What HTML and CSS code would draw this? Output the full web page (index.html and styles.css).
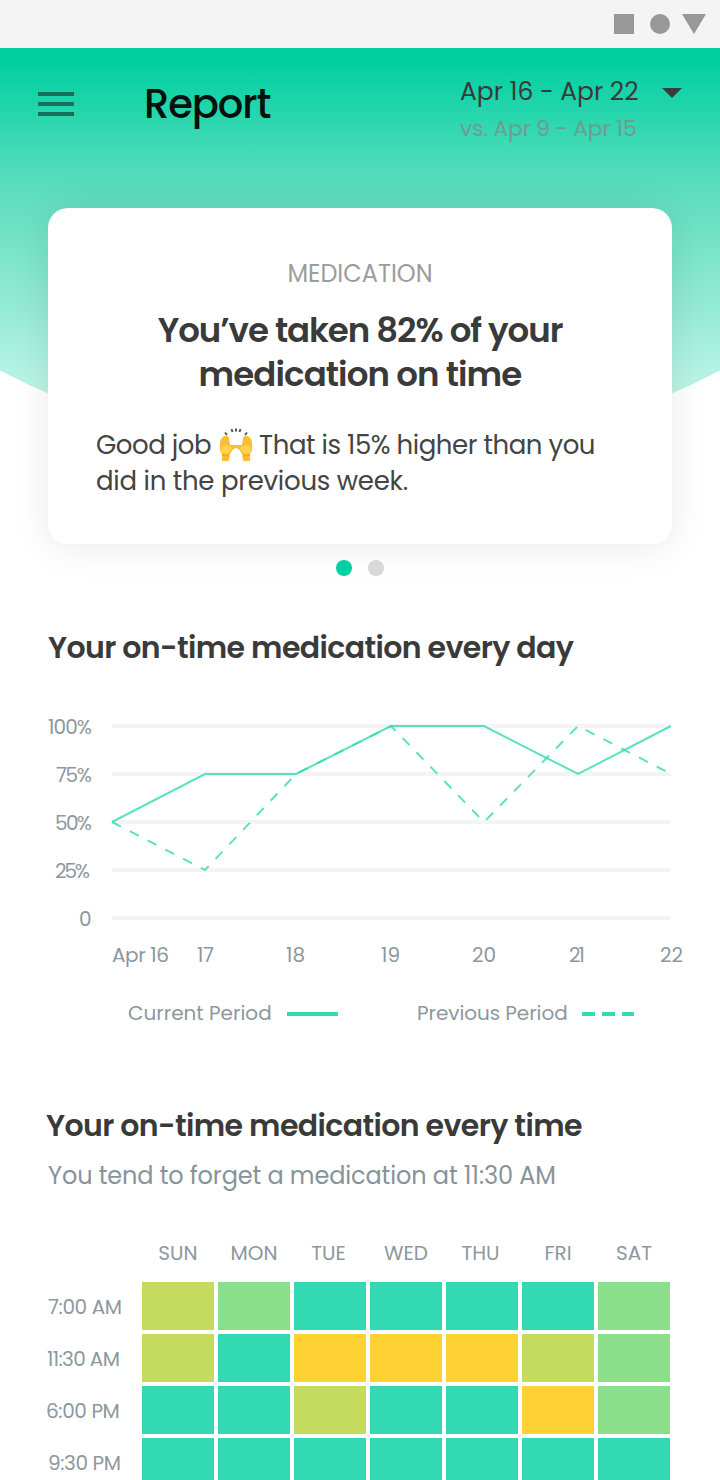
FILE: index.html
```html
<!DOCTYPE html>
<html lang="en">
<head>
<meta charset="utf-8">
<title>Report</title>
<link rel="stylesheet" href="styles.css">
</head>
<body>
<div class="screen">
  <div class="status-bar">
    <svg class="status-icons" viewBox="0 0 92 20"><path d="M0 0h20v20H0z"/><circle cx="46" cy="10" r="10"/><path d="M68 0h24L80 20z"/></svg>
  </div>
  <div class="backdrop"></div>
  <header class="app-bar">
    <svg class="menu" viewBox="0 0 36 24"><path d="M0 2h36M0 12h36M0 22h36"/></svg>
    <h1 class="app-title">Report</h1>
    <div class="period">
      <div class="period-current">Apr 16 - Apr 22</div>
      <div class="period-previous">vs. Apr 9 - Apr 15</div>
    </div>
    <svg class="caret" viewBox="0 0 20 10"><path d="M0 0h20L10 10z"/></svg>
  </header>
  <main class="content">
    <article class="card">
      <div class="card-label">MEDICATION</div>
      <h2 class="card-title">You’ve taken 82% of your<br><span class="title-second">medication on time</span></h2>
      <p class="card-text"><span class="text-first">Good job <svg class="hands" viewBox="0 0 34 34"><g fill="none" stroke="#555" stroke-width="2"><path d="M6 4.500 8 7M12.500 1 13.500 4M17 .5v3M21.500 1 20.500 4M28 4.500 26 7"/></g><path fill="#f9be35" d="M1 15Q1 11 4 9Q8 6 10 10L11 17Q17 17 23 17L24 10Q26 6 30 9Q33 11 33 15Q34 23 31 26V33H24L23 26Q20 20 17 20Q14 20 11 26L10 33H3V26Q0 23 1 15Z"/><path fill="#ffd252" d="M2 20Q6 16 11 18L13 20 10 25H3ZM32 20Q28 16 23 18L21 20 24 25H31Z"/><path fill="#eea52b" d="M3 27h7v1H3zM24 27h7v1h-7z"/></svg> That is 15% higher than you</span><br><span class="text-second">did in the previous week.</span></p>
    </article>
    <div class="pager"><span class="dot dot-active"></span><span class="dot"></span></div>

    <section>
      <h2 class="section-title">Your on-time medication every day</h2>
      <svg class="chart" viewBox="0 700 720 280">
        <path class="grid-lines" d="M112 726H671M112 774H671M112 822H671M112 870H671M112 918H671"/>
        <path class="series" d="M112 822 205 774H296L391 726H484L578 774 671 726"/>
        <path class="series previous" d="M112 822 205 870 296 774 391 726 484 822 578 726 671 774"/>
        <g class="axis">
          <text x="48" y="734" textLength="44">100%</text>
          <text x="56" y="782" textLength="36">75%</text>
          <text x="55" y="830" textLength="37">50%</text>
          <text x="55" y="878" textLength="35">25%</text>
          <text x="79" y="926">0</text>
          <text x="112" y="962" textLength="57">Apr 16</text>
          <text x="197" y="962" textLength="17">17</text>
          <text x="286" y="962" textLength="19">18</text>
          <text x="381" y="962" textLength="19">19</text>
          <text x="472" y="962" textLength="24">20</text>
          <text x="569" y="962" textLength="16">21</text>
          <text x="660" y="962" textLength="23">22</text>
        </g>
      </svg>
      <div class="legend">
        <span class="legend-current">Current Period</span><svg class="key" viewBox="0 0 52 4"><path d="M0 2H51"/></svg>
        <span class="legend-previous">Previous Period</span><svg class="key" viewBox="0 0 52 4"><path d="M0 2H52" stroke-dasharray="13 7"/></svg>
      </div>
    </section>

    <section class="time-section">
      <h2 class="section-title">Your on-time medication every time</h2>
      <p class="hint">You tend to forget a medication at 11:30 AM</p>
      <div class="heatmap">
        <span></span><span class="day">SUN</span><span class="day">MON</span><span class="day day-near">TUE</span><span class="day">WED</span><span class="day day-near">THU</span><span class="day">FRI</span><span class="day">SAT</span>
        <span class="time">7:00 AM</span><i class="low"></i><i class="mid"></i><i></i><i></i><i></i><i></i><i class="mid"></i>
        <span class="time time-tight">11:30 AM</span><i class="low"></i><i></i><i class="poor"></i><i class="poor"></i><i class="poor"></i><i class="low"></i><i class="mid"></i>
        <span class="time time-out">6:00 PM</span><i></i><i></i><i class="low"></i><i></i><i></i><i class="poor"></i><i class="mid"></i>
        <span class="time">9:30 PM</span><i></i><i></i><i></i><i></i><i></i><i></i><i></i>
      </div>
    </section>
  </main>
</div>
</body>
</html>
```
FILE: styles.css
```css
* { box-sizing: border-box; margin: 0; padding: 0; }
body { background: #fff; color: #3a3a3a; font-family: Poppins, Inter, "Open Sans", sans-serif; }
svg { display: block; flex: none; }
.screen { position: relative; width: 720px; height: 1480px; overflow: hidden; }
.status-bar { display: flex; align-items: center; justify-content: flex-end; height: 48px; padding-right: 14px; background: #f4f4f4; }
.status-icons { width: 92px; height: 20px; fill: #989898; }
.backdrop {
  position: absolute; top: 48px; left: 0; width: 720px; height: 412px;
  background: linear-gradient(#00cfa1 0, #00cfa1 12px, #1cd4aa 52px, #42dab7 102px, #62debe 152px, #b3f2e2 322px, #dcfaf3 412px);
  clip-path: circle(776px at 360px -365px);
}
.app-bar { position: relative; display: flex; align-items: flex-start; height: 160px; padding: 24px 38px 0; }
.menu { width: 36px; height: 24px; margin-top: 20px; stroke: #18705a; stroke-width: 4; }
.app-title { width: 316px; margin-left: 70px; font-size: 40px; font-weight: 500; line-height: 64px; letter-spacing: -1.1px; color: #05110e; }
.period { width: 202px; padding-top: 1px; line-height: 37px; white-space: nowrap; }
.period-current { font-size: 25px; letter-spacing: -.05px; }
.period-previous { font-size: 22px; letter-spacing: -.22px; color: #729b90; }
.caret { width: 20px; height: 10px; margin-top: 16px; fill: #3a3a3a; }
.content { position: relative; padding: 0 48px; }
.card { height: 336px; padding: 51px 48px 0; border-radius: 20px; background: #fff; box-shadow: 0 2px 38px rgba(0,0,0,.09); }
.card-label { text-align: center; font-size: 24px; line-height: 30px; color: #9c9c9c; }
.card-title { margin-top: 19px; text-align: center; font-size: 34px; font-weight: 600; line-height: 44px; letter-spacing: -1.05px; white-space: nowrap; }
.title-second { letter-spacing: -.9px; }
.card-text { margin-top: 31px; font-size: 26px; line-height: 36px; letter-spacing: -.25px; white-space: nowrap; color: #444; }
.text-first { letter-spacing: -.45px; }
.hands { display: inline-block; width: 34px; height: 34px; margin: -8px 0 -8px 1px; vertical-align: 0; }
.pager { display: flex; justify-content: center; gap: 16px; margin-top: 16px; }
.dot { width: 16px; height: 16px; border-radius: 50%; background: #d8d8d8; }
.dot-active { background: #00cfa1; }
.section-title { margin-top: 51px; font-size: 30px; font-weight: 600; line-height: 42px; letter-spacing: -.6px; white-space: nowrap; }
.chart { width: 720px; height: 280px; margin: 31px -48px 0; font-size: 20px; }
.grid-lines { fill: none; stroke: #f4f4f4; stroke-width: 4; }
.series { fill: none; stroke: #33d9b2; stroke-width: 2; stroke-opacity: .8; }
.previous { stroke-dasharray: 10 10; stroke-dashoffset: 0; }
.axis { fill: #8c989e; }
.legend { display: flex; align-items: center; height: 30px; margin: 18px 0 0 80px; font-size: 20px; line-height: 30px; color: #8c989e; white-space: nowrap; }
.legend-current { width: 159px; }
.legend-previous { width: 165px; margin-left: 78px; letter-spacing: -.07px; }
.key { width: 52px; height: 4px; margin-top: 2px; stroke: #33d9b2; stroke-width: 4; }
.time-section { margin-top: 77px; }
.time-section .section-title { margin-left: -2px; }
.hint { margin-top: 14px; font-size: 24px; line-height: 30px; letter-spacing: -.12px; color: #87939a; white-space: nowrap; }
.heatmap { display: grid; grid-template-columns: 90px repeat(7, 72px); grid-template-rows: 37px repeat(4, 48px); gap: 4px; margin-top: 50px; font-size: 20px; color: #8c989e; white-space: nowrap; }
.heatmap i { background: #33d9b2; }
.heatmap .mid { background: #8bdf8b; }
.heatmap .low { background: #c5db5e; }
.heatmap .poor { background: #ffd233; }
.day { text-align: center; line-height: 24px; }
.day-near { margin-left: -3px; }
.time { line-height: 50px; letter-spacing: -.4px; }
.time-tight { margin-left: -1px; letter-spacing: -.65px; }
.time-out { margin-left: -2px; }
```
